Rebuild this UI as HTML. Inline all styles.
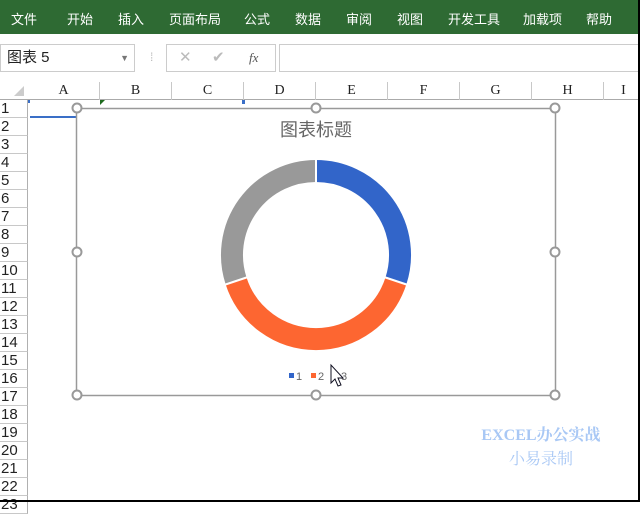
<!DOCTYPE html>
<html><head><meta charset="utf-8"><style>
*{margin:0;padding:0;box-sizing:border-box}
body{width:640px;height:502px;overflow:hidden;background:#fff;position:relative;font-family:"Liberation Sans","Noto Sans CJK SC",sans-serif}
.a{position:absolute}
.rib{left:0;top:0;width:640px;height:34px;background:#2e6a33;color:#fff;font-size:13px}
.rib span{position:absolute;top:9px}
.ch{top:82px;height:18px;font-family:"Liberation Serif","Noto Serif CJK SC",serif;font-size:14px;color:#222;text-align:center;line-height:18px;border-right:1px solid #c8c8c8}
.rh{left:0;width:28px;height:18px;font-family:"Liberation Sans",sans-serif;font-size:15px;color:#222;padding-left:1px;line-height:18px;border-bottom:1px solid #c8c8c8;border-right:1px solid #b0b0b0}
</style></head><body>
<div class="a rib">
<span style="left:11px">文件</span><span style="left:67px">开始</span><span style="left:118px">插入</span><span style="left:169px">页面布局</span><span style="left:244px">公式</span><span style="left:295px">数据</span><span style="left:346px">审阅</span><span style="left:397px">视图</span><span style="left:448px">开发工具</span><span style="left:523px">加载项</span><span style="left:586px">帮助</span>
</div>
<div class="a" style="left:0;top:44px;width:135px;height:28px;border:1px solid #ccc;font-size:15px;line-height:26px;padding-left:6px;color:#222">图表 5<span style="position:absolute;right:5px;top:0;font-size:9px;color:#777">▼</span></div>
<div class="a" style="left:150px;top:50px;color:#bbb;font-size:12px">⁞</div>
<div class="a" style="left:166px;top:44px;width:110px;height:28px;border:1px solid #ccc;color:#bbb;font-size:15px;line-height:26px"><span style="position:absolute;left:12px">✕</span><span style="position:absolute;left:45px">✔</span><span style="position:absolute;left:82px;color:#555;font-style:italic;font-family:'Liberation Serif',serif;font-size:13px">fx</span></div>
<div class="a" style="left:279px;top:44px;width:361px;height:28px;border:1px solid #ccc"></div>
<div class="a" style="left:0;top:99px;width:640px;height:1px;background:#aaa"></div>
<div class="a" style="left:14px;top:86px;width:0;height:0;border-left:10px solid transparent;border-bottom:10px solid #ccc"></div>
<div class="a ch" style="left:28px;width:72px">A</div>
<div class="a ch" style="left:100px;width:72px">B</div>
<div class="a ch" style="left:172px;width:72px">C</div>
<div class="a ch" style="left:244px;width:72px">D</div>
<div class="a ch" style="left:316px;width:72px">E</div>
<div class="a ch" style="left:388px;width:72px">F</div>
<div class="a ch" style="left:460px;width:72px">G</div>
<div class="a ch" style="left:532px;width:72px">H</div>
<div class="a ch" style="left:604px;width:40px">I</div>
<div class="a" style="left:0;top:100px">
<div class="rh">1</div><div class="rh">2</div><div class="rh">3</div><div class="rh">4</div><div class="rh">5</div><div class="rh">6</div><div class="rh">7</div><div class="rh">8</div><div class="rh">9</div><div class="rh">10</div><div class="rh">11</div><div class="rh">12</div><div class="rh">13</div><div class="rh">14</div><div class="rh">15</div><div class="rh">16</div><div class="rh">17</div><div class="rh">18</div><div class="rh">19</div><div class="rh">20</div><div class="rh">21</div><div class="rh">22</div><div class="rh">23</div>
</div>
<div class="a" style="left:30px;top:116px;width:46px;height:2px;background:#3a6fc7"></div>
<div class="a" style="left:28px;top:100px;width:2px;height:3px;background:#3a6fc7"></div>
<div class="a" style="left:242px;top:100px;width:3px;height:4px;background:#3a6fc7"></div>
<div class="a" style="left:100px;top:100px;width:0;height:0;border-right:5px solid transparent;border-top:5px solid #1e6b1e"></div>
<svg class="a" style="left:0;top:0" width="640" height="502">
<rect x="76.5" y="108.5" width="479" height="287" fill="#fff" stroke="#999" stroke-width="1.5"/>
<text x="316" y="136" text-anchor="middle" font-size="18" fill="#666" font-family="Liberation Sans,Noto Sans CJK SC,sans-serif">图表标题</text>
<g fill="none" stroke-width="22">
<path d="M316 171 A84 84 0 0 1 395.9 281" stroke="#3265c9"/>
<path d="M395.9 281 A84 84 0 0 1 236.1 281" stroke="#fd6631"/>
<path d="M236.1 281 A84 84 0 0 1 316 171" stroke="#999"/>
</g>
<g stroke="#fff" stroke-width="2"><line x1="316" y1="158" x2="316" y2="183"/><line x1="384" y1="277" x2="408" y2="285"/><line x1="248" y1="277" x2="224" y2="285"/></g>
<rect x="289" y="373" width="5" height="5" fill="#3265c9"/><text x="296" y="380" font-size="11" fill="#666">1</text>
<rect x="311" y="373" width="5" height="5" fill="#fd6631"/><text x="318" y="380" font-size="11" fill="#666">2</text>
<text x="341" y="380" font-size="11" fill="#666">3</text>
<path d="M331 365 L331 383 L335 379 L338 386 L341 385 L338 378 L343 378 Z" fill="#fff" stroke="#112" stroke-width="1"/>
<g fill="#fff" stroke="#999" stroke-width="2">
<circle cx="77" cy="108" r="4.5"/><circle cx="316" cy="108" r="4.5"/><circle cx="555" cy="108" r="4.5"/>
<circle cx="77" cy="252" r="4.5"/><circle cx="555" cy="252" r="4.5"/>
<circle cx="77" cy="395" r="4.5"/><circle cx="316" cy="395" r="4.5"/><circle cx="555" cy="395" r="4.5"/>
</g>
<text x="541" y="440" text-anchor="middle" font-size="16" font-weight="bold" fill="#a9c8f5" font-family="Liberation Serif,Noto Serif CJK SC,serif">EXCEL办公实战</text>
<text x="541" y="464" text-anchor="middle" font-size="16" fill="#a9c8f5" font-family="Liberation Serif,Noto Serif CJK SC,serif">小易录制</text>
<rect x="0" y="500" width="640" height="2" fill="#000"/>
<rect x="638" y="0" width="2" height="502" fill="#000"/>
</svg>
</body></html>
